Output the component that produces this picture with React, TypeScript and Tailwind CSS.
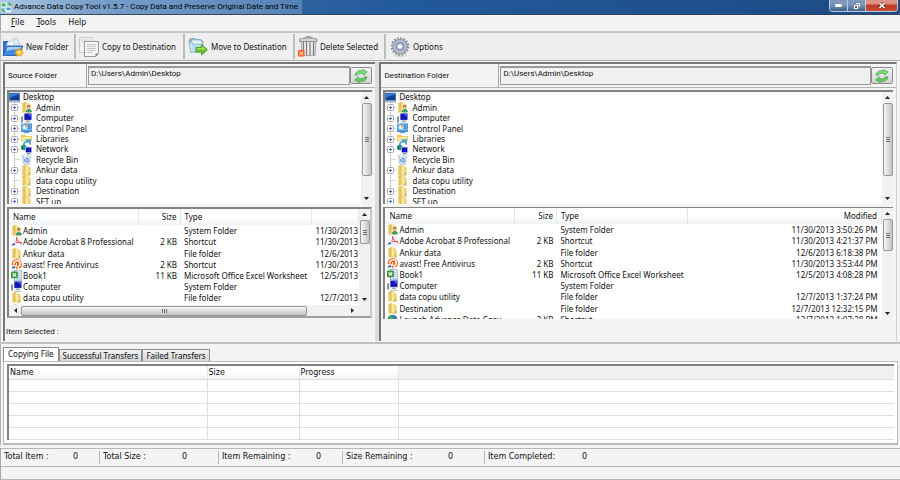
import { useState } from "react";
import clsx from "clsx";

type IconName =
  | "desktop"
  | "user"
  | "computer"
  | "control"
  | "libraries"
  | "network"
  | "recycle"
  | "folder"
  | "acrobat"
  | "avast"
  | "excel"
  | "globe";

interface TreeItem {
  label: string;
  icon: IconName;
  expandable: boolean;
}

interface FileRow {
  name: string;
  icon: IconName;
  size: string;
  type: string;
  date: string;
  time: string;
}

const TREE: TreeItem[] = [
  { label: "Admin", icon: "user", expandable: true },
  { label: "Computer", icon: "computer", expandable: true },
  { label: "Control Panel", icon: "control", expandable: true },
  { label: "Libraries", icon: "libraries", expandable: true },
  { label: "Network", icon: "network", expandable: true },
  { label: "Recycle Bin", icon: "recycle", expandable: false },
  { label: "Ankur data", icon: "folder", expandable: true },
  { label: "data copu utility", icon: "folder", expandable: false },
  { label: "Destination", icon: "folder", expandable: true },
  { label: "SET up", icon: "folder", expandable: true },
];

const FILES: FileRow[] = [
  { name: "Admin", icon: "user", size: "", type: "System Folder", date: "11/30/2013", time: "3:50:26 PM" },
  { name: "Adobe Acrobat 8 Professional", icon: "acrobat", size: "2 KB", type: "Shortcut", date: "11/30/2013", time: "4:21:37 PM" },
  { name: "Ankur data", icon: "folder", size: "", type: "File folder", date: "12/6/2013", time: "6:18:38 PM" },
  { name: "avast! Free Antivirus", icon: "avast", size: "2 KB", type: "Shortcut", date: "11/30/2013", time: "3:53:44 PM" },
  { name: "Book1", icon: "excel", size: "11 KB", type: "Microsoft Office Excel Worksheet", date: "12/5/2013", time: "4:08:28 PM" },
  { name: "Computer", icon: "computer", size: "", type: "System Folder", date: "", time: "" },
  { name: "data copu utility", icon: "folder", size: "", type: "File folder", date: "12/7/2013", time: "1:37:24 PM" },
  { name: "Destination", icon: "folder", size: "", type: "File folder", date: "12/7/2013", time: "12:32:15 PM" },
  { name: "Launch Advance Data Copy", icon: "globe", size: "2 KB", type: "Shortcut", date: "12/7/2013", time: "1:07:28 PM" },
];

const TABS = ["Copying File", "Successful Transfers", "Failed Transfers"];

const STATUS = [
  { label: "Total Item :", value: "0", box: "w-[99px] pr-[21px]" },
  { label: "Total Size :", value: "0", box: "w-[119px] pr-[31px]" },
  { label: "Item Remaining :", value: "0", box: "w-[124px] pr-[21px]" },
  { label: "Size Remaining :", value: "0", box: "w-[142px] pr-[31px]" },
  { label: "Item Completed:", value: "0", box: "w-[102px]" },
];

function Monitor({ x, y, w, h }: { x: number; y: number; w: number; h: number }) {
  return (
    <>
      <rect x={x} y={y} width={w} height={h} fill="#c9cfda" />
      <rect x={x + 1} y={y + 1} width={w - 2} height={h - 2} fill="#1414b8" />
      <path d={`M${x + w / 2 - 2} ${y + h}h4l1 2h-6z`} fill="#9aa3b3" />
    </>
  );
}

function FolderShape() {
  return (
    <>
      <path d="M2 1.500l6-1v14l-6 1z" fill="#e8c659" />
      <path d="M7 1h4v4l3 1v9H7z" fill="#f8e9a4" />
      <path d="M10 1l4 3v11l-4 1z" fill="#efd479" />
      <path d="M2 2l5-1v13l2 1 5-.5" fill="none" stroke="#c9a640" strokeWidth=".6" />
      <path d="M7.500 2v12" stroke="#fff8d8" strokeWidth="1" />
      <path d="M12.500 11v3" stroke="#7da85a" strokeWidth="1" />
    </>
  );
}

function Shortcut() {
  return (
    <>
      <rect x="0" y="9" width="7" height="7" fill="#fff" />
      <path d="M1 15c0-3 1-4 3-4v-1.5L6.500 12 4 14.500V13c-1.500 0-2 .5-3 2z" fill="#2f62b5" />
    </>
  );
}

function ShellIcon({ name }: { name: IconName }) {
  return (
    <svg viewBox="0 0 16 16" className="size-[11px] shrink-0" aria-hidden="true">
      {name === "folder" && <FolderShape />}
      {name === "user" && (
        <>
          <FolderShape />
          <circle cx="11" cy="7" r="2.600" fill="#8a5a33" />
          <circle cx="11" cy="8" r="1.700" fill="#f0c9a0" />
          <path d="M7 15c0-4 2-5 4-5s5 1 5 5z" fill="#3c9a72" />
        </>
      )}
      {name === "desktop" && (
        <>
          <rect y="1" width="16" height="14" fill="#6f8fb5" />
          <rect x="1" y="2" width="14" height="10" fill="#123f94" />
          <path d="M1 2h14v2Q6 5 1 9z" fill="#2f7fd6" />
          <rect x="1" y="12.500" width="14" height="1.500" fill="#b9d0ea" />
        </>
      )}
      {name === "computer" && (
        <>
          <path d="M0 5h3v9H0z" fill="#8e97a8" />
          <path d="M1 6h1v2H1z" fill="#30b030" />
          <Monitor x={4} y={0} w={12} h={11} />
          <path d="M9 1h6v6z" fill="#3d58f0" />
          <path d="M5 14h10l1 1.500H4z" fill="#aab1bf" />
        </>
      )}
      {name === "control" && (
        <>
          <rect y="1" width="16" height="12" rx="1" fill="#3c86cf" />
          <rect x="1" y="2" width="14" height="9" fill="#7fc0f0" />
          <circle cx="6" cy="6" r="3" fill="#e8f6ff" />
          <path d="M6 6V3a3 3 0 0 1 3 3z" fill="#f09a30" />
          <path d="M10 4h4M10 6h4M10 8h3" stroke="#1c5ca8" />
          <path d="M5 13h6l2 2H3z" fill="#7ba5cc" />
        </>
      )}
      {name === "libraries" && (
        <>
          <path d="M0 1h6l1 2h9v8H0z" fill="#e9c75a" />
          <path d="M1 4h14v6H1z" fill="#fae79b" />
          <path d="M4 16a5 5 0 0 1 9-3V9H7" fill="none" stroke="#4aa3dc" strokeWidth="2.600" />
        </>
      )}
      {name === "network" && (
        <>
          <circle cx="4" cy="5" r="4" fill="#1aa53a" />
          <path d="M1 3l3 2-1 3M5 1l2 3" stroke="#3a7ff0" strokeWidth="1.500" />
          <rect x="6" y="4" width="10" height="9" fill="#d7dbe4" />
          <rect x="7" y="5" width="8" height="7" fill="#1111c4" />
          <path d="M9 13h4l1 2H8z" fill="#7f8795" />
        </>
      )}
      {name === "recycle" && (
        <>
          <path d="M2 2h12l-2 13H4z" fill="#d4e3f2" stroke="#8ba7c4" strokeWidth=".8" />
          <path d="M2 2l4-1 3 1 3-1 2 1-1 2H3z" fill="#f4f8fc" stroke="#9db4cc" strokeWidth=".5" />
          <circle cx="8" cy="9" r="2.400" fill="none" stroke="#2d78d8" strokeWidth="1.600" strokeDasharray="3.500 1.300" />
        </>
      )}
      {name === "acrobat" && (
        <>
          <path d="M3 0h9l3 3v12H3z" fill="#f6f6f8" stroke="#d0d2d8" strokeWidth=".6" />
          <path d="M8 2c1 5 4 8 8 9M8 2c1 4-1 8-4 11M4 11c4-2 8-2 12-1" fill="none" stroke="#de3340" strokeWidth="1.200" />
          <Shortcut />
        </>
      )}
      {name === "avast" && (
        <>
          <circle cx="8.500" cy="7.500" r="7.500" fill="#e8681a" />
          <path d="M4.500 8a4.500 4.500 0 1 1 7 2.500c-2 1-2 3 0 4" fill="none" stroke="#fff" strokeWidth="2.200" />
          <path d="M8 6v5" stroke="#fff" strokeWidth="1.600" />
          <Shortcut />
        </>
      )}
      {name === "excel" && (
        <>
          <path d="M5 0h8l3 3v13H5z" fill="#e9f3fb" stroke="#4f7db5" strokeWidth="1" />
          <path d="M10 5h4M10 8h4M10 11h4M8 14h6" stroke="#7fa8cd" />
          <rect y="2" width="10" height="10" rx="1" fill="#3d9440" />
          <path d="M2.500 4.500l5 5M7.500 4.500l-5 5" stroke="#fff" strokeWidth="1.600" />
        </>
      )}
      {name === "globe" && (
        <>
          <circle cx="8" cy="8" r="7" fill="#2f74c8" />
          <path d="M3 4c3-3 5-2 6 0s-2 3-3 5-3 0-4-2zM11 6l4 1-2 5z" fill="#43b04a" />
          <Shortcut />
        </>
      )}
    </svg>
  );
}

function AppIcon() {
  return (
    <svg viewBox="0 0 12 12" className="size-[11px] shrink-0" aria-hidden="true">
      <rect width="7" height="7" fill="#e8f3fb" stroke="#8fb4cf" strokeWidth=".6" />
      <rect x="1" y="1.500" width="4" height="3.500" fill="#45c04a" />
      <rect x="4.500" y="4.500" width="7" height="7" fill="#fff" stroke="#9db8cc" strokeWidth=".6" />
      <rect x="6" y="6" width="4.500" height="3" fill="#3f9ede" />
      <path d="M1 8l3 3M8 1l3 2.500" stroke="#39b23f" strokeWidth="1.600" />
    </svg>
  );
}

function NewFolderIcon() {
  return (
    <svg viewBox="0 0 22 20" className="h-5 w-[22px] shrink-0" aria-hidden="true">
      <path d="M1 4h5l1 2h9v12H1z" fill="#2e74cf" />
      <path d="M5 6l8-5 5 6-4 6H4z" fill="#f4f7fd" stroke="#a9b9da" strokeWidth=".6" />
      <path d="M11 2.500l5-2 1 8-5 1z" fill="#dfe8f8" stroke="#9cb2dc" strokeWidth=".4" />
      <path d="M1 18.500L5 9h16l-5 9.500z" fill="#3d8ae0" stroke="#1a52a8" strokeWidth=".8" />
      <path d="M5.500 10h14l-1 2Q10 12 4 14z" fill="#a7d0f8" />
      <path d="M17 11l1.200 2.200 2.500-.7-.8 2.300 1.800 1.700-2.300.6-.2 2.400-2.200-1.200-2.200 1.200-.2-2.400-2.200-.6 1.700-1.700-.7-2.300 2.400.7z" fill="#f8b820" stroke="#e8920c" strokeWidth=".4" />
      <circle cx="17" cy="15.300" r="1.500" fill="#fff3b8" />
    </svg>
  );
}

function CopyIcon() {
  return (
    <svg viewBox="0 0 20 20" className="size-5 shrink-0" aria-hidden="true">
      <path d="M.5.500h13v15H.5z" fill="#f2f2f2" stroke="#b8b8b8" strokeWidth=".7" />
      <path d="M2.500 3h9M2.500 5h2" stroke="#c9c9c9" strokeWidth=".8" />
      <path d="M5.500 4.500h14v12l-3 3h-11z" fill="#f7f7f7" stroke="#8f8f8f" strokeWidth=".9" />
      <path d="M8 7.500h9M8 9.500h9M8 11.500h9M8 13.500h9M8 15.500h6" stroke="#bcbcbc" strokeWidth=".9" />
      <path d="M16.500 19.500v-3h3z" fill="#777" />
    </svg>
  );
}

function MoveIcon() {
  return (
    <svg viewBox="0 0 20 18" className="h-[18px] w-5 shrink-0" aria-hidden="true">
      <path d="M1 2l2-1.500h4l1 1h5l2 2V14H3z" fill="#8cbccf" stroke="#7497a8" strokeWidth=".6" />
      <path d="M4 2.500h8l2 2V14H4z" fill="#eaf5fa" />
      <path d="M1 4h3l1 2h8l1 7.500-11 1z" fill="#b5dced" stroke="#7aa6bb" strokeWidth=".6" />
      <path d="M2.500 6h1l1 7h-1z" fill="#e4f4fb" />
      <path d="M8 9.500h5.500V6.500l6 5.200-6 5.300v-3H8z" fill="#6cc62c" stroke="#3e9412" strokeWidth=".8" />
      <path d="M8.800 10.300h5.500V8.500l3 2.700H8.800z" fill="#b0ea78" />
    </svg>
  );
}

function TrashIcon() {
  return (
    <svg viewBox="0 0 20 21" className="h-[21px] w-5 shrink-0" aria-hidden="true">
      <path d="M3 5h15l-1 14.500H4z" fill="#d9d9d9" stroke="#858585" strokeWidth=".6" />
      <path d="M5.500 6v13M8.500 6v13M12 6v13M15.500 6v13" stroke="#7d7d7d" strokeWidth="1.100" />
      <path d="M7 6v13M10.200 6v13M13.800 6v13" stroke="#f5f5f5" strokeWidth="1.100" />
      <path d="M1.500 3Q10 0 19 3v2.500h-17.500z" fill="#c3c3c3" stroke="#818181" strokeWidth=".7" />
      <path d="M7 2c0-2 7-2 7 0" fill="none" stroke="#8c8c8c" />
      <path d="M3 4h14.500" stroke="#f1f1f1" strokeWidth=".8" />
      <rect y="14" width="6.500" height="6.500" rx=".6" fill="#f0561d" />
      <path d="M1.300 15.300l4 4M5.300 15.300l-4 4" stroke="#ffd9b0" strokeWidth="1.100" />
    </svg>
  );
}

function GearIcon() {
  return (
    <svg viewBox="0 0 20 20" className="size-5 shrink-0" aria-hidden="true">
      <ellipse cx="10" cy="18.600" rx="7" ry="1.200" fill="#d4d4d4" />
      <circle cx="10" cy="9.500" r="8.200" fill="none" stroke="#8b8e98" strokeWidth="2.200" strokeDasharray="1.700 1.520" />
      <circle cx="10" cy="9.500" r="7.400" fill="#a9adba" stroke="#85899a" strokeWidth=".6" />
      <circle cx="10" cy="9.500" r="5.400" fill="#9299bb" stroke="#d5d8e4" strokeWidth=".9" />
      <circle cx="10" cy="9.500" r="3.300" fill="#c9cde0" stroke="#7c84a6" strokeWidth=".6" />
      <circle cx="10" cy="9.500" r="1.900" fill="#fff" />
    </svg>
  );
}

function RefreshIcon() {
  return (
    <svg viewBox="0 0 14 14" className="size-[14px]" aria-hidden="true">
      <path
        d="M1 6.200C1.500 2.500 5 .8 8.500 1.800l.3-1.400 4.500 2.600-3.500 3.200-.5-1.700C7 3.800 4.500 4.400 3.500 6.200z"
        fill="#7bdc70"
        stroke="#3d9550"
        strokeWidth=".6"
      />
      <path
        d="M13 7.800C12.500 11.500 9 13.200 5.500 12.200l-.3 1.400L.7 11l3.500-3.200.5 1.700c2.300.7 4.800.1 5.800-1.700z"
        fill="#5fce5a"
        stroke="#3d9550"
        strokeWidth=".6"
      />
    </svg>
  );
}

function Arrow({ d }: { d: string }) {
  return (
    <svg viewBox="0 0 5 5" className="size-[5px] shrink-0" aria-hidden="true">
      <path d={d} fill="#222" />
    </svg>
  );
}

function VerticalScroll({ thumb }: { thumb: string }) {
  return (
    <div className="flex w-[11px] shrink-0 flex-col items-center bg-[#f1f1f1]">
      <div className="flex h-[11px] items-center">
        <Arrow d="M0 4l2.500-3L5 4z" />
      </div>
      <div
        className={clsx(
          "flex w-[10px] flex-col items-center justify-center gap-px rounded-xs border border-[#979797] bg-linear-to-r from-[#f6f6f6] to-[#c2c3c5]",
          thumb,
        )}
      >
        <span className="h-px w-1 bg-[#6f6f6f]" />
        <span className="h-px w-1 bg-[#6f6f6f]" />
        <span className="h-px w-1 bg-[#6f6f6f]" />
      </div>
      <div className="mt-auto flex h-[11px] items-center">
        <Arrow d="M0 1l2.500 3L5 1z" />
      </div>
    </div>
  );
}

function HorizontalScroll() {
  return (
    <div className="flex h-[11px] shrink-0 items-center bg-[#f1f1f1]">
      <div className="flex w-[12px] justify-center">
        <Arrow d="M4 0L1 2.500 4 5z" />
      </div>
      <div className="mr-[43px] flex h-[10px] flex-1 items-center justify-center gap-px rounded-xs border border-[#979797] bg-linear-to-b from-[#f6f6f6] to-[#c2c3c5]">
        <span className="h-1 w-px bg-[#6f6f6f]" />
        <span className="h-1 w-px bg-[#6f6f6f]" />
        <span className="h-1 w-px bg-[#6f6f6f]" />
      </div>
      <div className="flex w-[20px] justify-start">
        <Arrow d="M1 0l3 2.500L1 5z" />
      </div>
    </div>
  );
}

function FolderTree() {
  return (
    <div className="flex h-[114px] overflow-hidden border-t-2 border-l-2 border-[#828282] bg-white font-['Noto_Sans','Verdana',sans-serif]">
      <ul className="flex h-[115px] flex-1 flex-col">
        <li className="flex min-h-0 flex-1 items-center gap-[2px]">
          <ShellIcon name="desktop" />
          <span className="bg-[#f3f3f3] px-px">Desktop</span>
        </li>
        {TREE.map((item) => (
          <li key={item.label} className="flex min-h-0 flex-1 items-center pl-[2px]">
            <svg viewBox="0 0 10 11" className="h-[11px] w-[10px] shrink-0" aria-hidden="true">
              <path d="M3.500 0v11M3.500 5.500h6" stroke="#b0b0b0" strokeDasharray="1 1" fill="none" />
              {item.expandable && (
                <>
                  <rect x=".5" y="2.500" width="6" height="6" rx="1" fill="#fbfbfb" stroke="#a8a8a8" />
                  <path d="M2 5.500h3M3.500 4v3" stroke="#4a66ad" />
                </>
              )}
            </svg>
            <ShellIcon name={item.icon} />
            <span className="pl-[4px]">{item.label}</span>
          </li>
        ))}
      </ul>
      <VerticalScroll thumb="h-[73px]" />
    </div>
  );
}

const headCell =
  "border-r border-[#e3e5e8] bg-linear-to-b from-white from-50% to-[#f1f2f4] p-0 font-normal";

function FileTable({ full }: { full: boolean }) {
  return (
    <table className="h-[117px] w-full table-fixed border-collapse font-['Noto_Sans','Verdana',sans-serif] whitespace-nowrap">
      <colgroup>
        <col className="w-[129px]" />
        <col className="w-[42px]" />
        <col className="w-[131px]" />
        <col />
      </colgroup>
      <thead>
        <tr className="h-[16px]">
          <th className={clsx(headCell, "pl-1 text-left")}>Name</th>
          <th className={clsx(headCell, "pr-[3px] text-right")}>Size</th>
          <th className={clsx(headCell, "pl-1 text-left")}>Type</th>
          <th className={clsx(headCell, "pr-1 text-right")}>{full && "Modified"}</th>
        </tr>
      </thead>
      <tbody className="leading-[11px]">
        {FILES.map((file) => (
          <tr key={file.name}>
            <td className="p-0">
              <div className="flex h-[11px] items-center gap-px pl-[2px]">
                <ShellIcon name={file.icon} />
                <span>{file.name}</span>
              </div>
            </td>
            <td className="p-0 pr-[3px] text-right">{file.size}</td>
            <td className="p-0 pl-1">{file.type}</td>
            <td className={clsx("p-0 text-right", full ? "pr-1" : "pr-px")}>
              {full ? `${file.date} ${file.time}` : file.date}
            </td>
          </tr>
        ))}
      </tbody>
    </table>
  );
}

function FolderPane({ id, label, side }: { id: string; label: string; side: "source" | "destination" }) {
  const isSource = side === "source";
  return (
    <section
      className={clsx(
        "flex min-w-0 flex-col border-t-2 border-l-2 border-[#777] bg-[#f4f4f4] font-['Roboto','Tahoma',sans-serif]",
        isSource ? "flex-[18]" : "flex-[25] border-r border-r-[#d0d0d0]",
      )}
    >
      <div className="flex h-[24px] border-b border-[#b5b5b5]">
        <label
          htmlFor={id}
          className={clsx(
            "flex shrink-0 items-center border-r border-[#a5a5a5] pl-[3px]",
            isSource ? "w-[82px]" : "w-[118px]",
          )}
        >
          {label}
        </label>
        <input
          id={id}
          readOnly
          defaultValue="D:\Users\Admin\Desktop"
          className="my-[2px] ml-px min-w-0 flex-1 border border-t-2 border-[#999] bg-[#f0f0f0] px-[2px] pb-[5px] outline-none"
        />
        <button
          type="button"
          aria-label={`Refresh ${label}`}
          className="my-[3px] mr-[3px] flex w-[22px] shrink-0 items-center justify-center rounded-xs border border-[#8a8a8a] bg-linear-to-b from-[#f5f5f5] to-[#d2d2d2]"
        >
          <RefreshIcon />
        </button>
      </div>
      <div className="flex flex-col gap-[3px] pt-[2px] pr-[3px] pl-[2px]">
        <FolderTree />
        {isSource ? (
          <div className="flex h-[111px] flex-col border-2 border-[#828282] border-r-[#c9c9c9] border-b-[#a0a0a0] bg-white">
            <div className="flex min-h-0 flex-1">
              <div className="min-w-0 flex-1 overflow-hidden">
                <FileTable full={false} />
              </div>
              <VerticalScroll thumb="h-[24px]" />
            </div>
            <HorizontalScroll />
          </div>
        ) : (
          <div className="flex h-[112px] border-t border-l-2 border-[#828282] bg-white">
            <div className="min-w-0 flex-1 overflow-hidden">
              <FileTable full />
            </div>
            <VerticalScroll thumb="h-[32px]" />
          </div>
        )}
      </div>
      {isSource && <p className="pt-[9px] pl-px">Item Selected :</p>}
    </section>
  );
}

function TitleBar() {
  return (
    <header className="flex h-[15px] items-start border-b border-[#35465c] bg-linear-to-r from-[#4d7db3] via-[#22599b] via-45% to-[#1d4a84]">
      <div className="flex h-[14px] items-center gap-[2px] bg-linear-to-r from-[#c9dbee]/80 via-[#9dbbdc]/60 via-30% to-[#8fb0d6]/40 pr-1 pl-px">
        <AppIcon />
        <h1 className="font-['Roboto','Tahoma',sans-serif] whitespace-nowrap text-black">
          Advance Data Copy Tool v1.5.7 - Copy Data and Preserve Original Date and Time
        </h1>
      </div>
      <div className="mr-[2px] ml-auto flex h-[12px] overflow-hidden rounded-b-sm border border-t-0 border-[#b9cbe0]">
        <button type="button" aria-label="Minimize" className="flex w-[18px] items-center justify-center border-r border-[#b9cbe0] bg-linear-to-b from-[#7d99bb] from-40% to-[#3c5f8b]">
          <span className="h-[3px] w-[7px] rounded-xs bg-white" />
        </button>
        <button type="button" aria-label="Restore" className="flex w-[18px] items-center justify-center border-r border-[#b9cbe0] bg-linear-to-b from-[#7d99bb] from-40% to-[#3c5f8b]">
          <svg viewBox="0 0 8 8" className="size-2" aria-hidden="true">
            <path d="M2.500.500h5v5h-5z" fill="#eee" stroke="#4c5c72" strokeWidth=".6" />
            <path d="M.5 2.500h5v5h-5z" fill="#fff" stroke="#4c5c72" strokeWidth=".6" />
            <path d="M2 4h2v2H2z" fill="#4c5c72" />
          </svg>
        </button>
        <button type="button" aria-label="Close" className="flex w-[31px] items-center justify-center bg-linear-to-b from-[#dc9384] from-30% via-[#bd3a26] via-50% to-[#c94a31]">
          <svg viewBox="0 0 8 7" className="h-[7px] w-2" aria-hidden="true">
            <path d="M1.500 1l5 5M6.500 1l-5 5" stroke="#5a2a2a" strokeWidth="2.800" />
            <path d="M1.500 1l5 5M6.500 1l-5 5" stroke="#fff" strokeWidth="1.700" />
          </svg>
        </button>
      </div>
    </header>
  );
}

const toolButton =
  "my-px flex items-center border-r-2 border-[#bdbdbd] whitespace-nowrap";

export default function App() {
  const [tab, setTab] = useState(TABS[0]);

  return (
    <div className="flex min-h-screen flex-col bg-[#f4f4f4] font-['DejaVu_Sans','Verdana',sans-serif] text-[8px] leading-[10px] text-[#111]">
      <TitleBar />

      <nav className="flex h-[16px] items-center gap-[12px] border-l border-[#a8a8a8] pl-[10px]">
        <button type="button"><u>F</u>ile</button>
        <button type="button"><u>T</u>ools</button>
        <button type="button">Help</button>
      </nav>

      <div className="flex h-[30px] border-t-2 border-b border-l border-[#c4c4c4] border-b-[#ababab] bg-[#efefef] font-['Noto_Sans','Verdana',sans-serif]">
        <button type="button" className={clsx(toolButton, "w-[75px] gap-[2px] pl-px")}>
          <NewFolderIcon />
          New Folder
        </button>
        <button type="button" className={clsx(toolButton, "w-[109px] gap-[3px] pl-[3px]")}>
          <CopyIcon />
          Copy to Destination
        </button>
        <button type="button" className={clsx(toolButton, "w-[110px] gap-[3px] pl-[3px]")}>
          <MoveIcon />
          Move to Destination
        </button>
        <button type="button" className={clsx(toolButton, "w-[91px] gap-[2px] pl-[3px]")}>
          <TrashIcon />
          Delete Selected
        </button>
        <button type="button" className="my-px flex items-center gap-[3px] pl-[4px]">
          <GearIcon />
          Options
        </button>
      </div>

      <main className="flex h-[283px] border-b-2 border-l border-[#c0c0c0] pt-px pr-[3px] pb-px pl-[2px]">
        <FolderPane id="source-path" label="Source Folder" side="source" />
        <div className="w-[4px] shrink-0 bg-[#dcdcdc]" />
        <FolderPane id="destination-path" label="Destination Folder" side="destination" />
      </main>

      <section className="border-l border-[#b0b0b0] pt-[3px] pr-[2px] pl-[2px]">
        <div role="tablist" className="flex items-end font-['Noto_Sans','Verdana',sans-serif]">
          {TABS.map((name) => (
            <button
              key={name}
              type="button"
              role="tab"
              aria-selected={tab === name}
              onClick={() => setTab(name)}
              className={clsx(
                "border border-b-0 border-[#8c8c94] whitespace-nowrap",
                tab === name
                  ? "h-[14px] bg-white px-[4px] pb-px"
                  : "h-[12px] bg-linear-to-b from-[#f2f2f2] to-[#d6d6d6] px-[3px]",
              )}
            >
              {name}
            </button>
          ))}
        </div>
        <div className="border border-b-2 border-[#b9b9c0] bg-white px-[3px] pt-[2px] pb-[3px]">
          <table className="w-full table-fixed border-collapse border-t-2 border-l-2 border-[#828282]">
            <colgroup>
              <col className="w-[199px]" />
              <col className="w-[92px]" />
              <col className="w-[99px]" />
              <col />
            </colgroup>
            <thead>
              <tr className="h-[14px] text-left">
                <th className={clsx(headCell, "pt-px pl-px")}>Name</th>
                <th className={clsx(headCell, "pt-px pl-px")}>Size</th>
                <th className={clsx(headCell, "pt-px pl-px")}>Progress</th>
                <th className="bg-[#f0f0f0] p-0" />
              </tr>
            </thead>
            <tbody>
              {[0, 1, 2, 3, 4].map((row) => (
                <tr key={row} className="h-[12px] border-y border-[#dedede]">
                  <td className="border-r border-[#dedede] p-0" />
                  <td className="border-r border-[#dedede] p-0" />
                  <td className="border-r border-[#dedede] p-0" />
                  <td className="p-0" />
                </tr>
              ))}
            </tbody>
          </table>
        </div>
      </section>

      <footer className="mt-[3px] flex flex-1 flex-col border-l border-[#a8a8a8]">
        <dl className="flex h-[19px] items-center border-t border-b border-[#b8b8b8]">
          {STATUS.map((item, i) => (
            <div
              key={item.label}
              className={clsx(
                "flex h-[13px] shrink-0 items-center justify-between pl-[3px]",
                item.box,
                i < STATUS.length - 1 && "border-r border-[#b8b8b8]",
              )}
            >
              <dt>{item.label}</dt>
              <dd>{item.value}</dd>
            </div>
          ))}
        </dl>
        <div className="flex-1 border-b border-[#b8b8b8]" />
      </footer>
    </div>
  );
}
